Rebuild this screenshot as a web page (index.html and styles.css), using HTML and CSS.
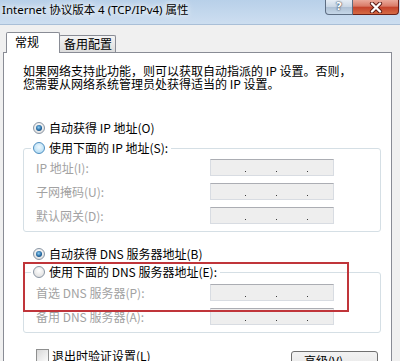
FILE: index.html
```html
<html>
<head>
<meta charset="utf-8">
<link rel="stylesheet" href="styles.css">
</head>
<body>

<div class="titlebar">
  <span class="title">Internet 协议版本 4 (TCP/IPv4) 属性</span>
  <div class="caption-buttons">
    <div class="caption-help">?</div>
    <div class="caption-close">
      <svg width="14" height="11" viewBox="0 0 14 11">
        <path d="M3 1.5 L11 9.5 M11 1.5 L3 9.5" stroke="#5a1a14" stroke-width="4.2" stroke-linecap="round"/>
        <path d="M3 1.5 L11 9.5 M11 1.5 L3 9.5" stroke="white" stroke-width="2.4" stroke-linecap="round"/>
      </svg>
    </div>
  </div>
</div>

<div class="tabs">
  <div class="tab tab-active">常规</div>
  <div class="tab">备用配置</div>
</div>

<div class="tab-panel">
  <p class="intro">如果网络支持此功能，则可以获取自动指派的 IP 设置。否则，<br>您需要从网络系统管理员处获得适当的 IP 设置。</p>

  <div class="option option-ip"><span class="radio checked"></span>自动获得 IP 地址(O)</div>

  <fieldset class="group">
    <legend class="option"><span class="radio hover"></span>使用下面的 IP 地址(S):</legend>
    <div class="field">
      <span class="field-label">IP 地址(I):</span>
      <div class="ipbox"><span></span><span></span><span></span></div>
    </div>
    <div class="field">
      <span class="field-label">子网掩码(U):</span>
      <div class="ipbox"><span></span><span></span><span></span></div>
    </div>
    <div class="field">
      <span class="field-label">默认网关(D):</span>
      <div class="ipbox"><span></span><span></span><span></span></div>
    </div>
  </fieldset>

  <div class="option option-dns"><span class="radio checked"></span>自动获得 DNS 服务器地址(B)</div>

  <fieldset class="group group-dns">
    <legend class="option"><span class="radio"></span>使用下面的 DNS 服务器地址(E):</legend>
    <div class="field">
      <span class="field-label">首选 DNS 服务器(P):</span>
      <div class="ipbox"><span></span><span></span><span></span></div>
    </div>
    <div class="field">
      <span class="field-label">备用 DNS 服务器(A):</span>
      <div class="ipbox"><span></span><span></span><span></span></div>
    </div>
  </fieldset>

  <div class="footer">
    <div class="check"><span class="checkbox"></span>退出时验证设置(L)</div>
    <div class="button">高级(V)...</div>
  </div>

  <div class="annotation"></div>
</div>

</body>
</html>
```

FILE: styles.css
```css
body {
  margin: 0;
  width: 400px;
  height: 361px;
  overflow: hidden;
  background-color: #f0f0f0;
  font-family: "Noto Sans CJK SC", sans-serif;
  font-size: 12px;
  color: black;
}

.titlebar {
  display: flex;
  justify-content: space-between;
  align-items: flex-start;
  height: 24px;
  background: linear-gradient(#b8d0e9, #cddef0);
  border-bottom: 1px solid #a9bfd7;
}

.title {
  margin-left: 2px;
  line-height: 20px;
  font-family: "Noto Sans", "Noto Sans CJK SC", sans-serif;
  font-size: 11.5px;
  text-shadow: 0 0 5px white, 0 0 8px white;
}

.caption-buttons {
  display: flex;
  margin-right: 1px;
}

.caption-help {
  width: 28px;
  height: 15px;
  box-sizing: border-box;
  border: 1px solid #5d6d82;
  border-top: none;
  border-radius: 0 0 0 4px;
  background: linear-gradient(#e6edf5, #c9d6e4 50%, #aec0d4 51%, #c6d7e8);
  color: white;
  font-family: "DejaVu Sans", sans-serif;
  font-weight: bold;
  font-size: 11px;
  line-height: 13px;
  text-align: center;
  text-shadow: 0 0 2px #2b3a4f, 0 0 1px #2b3a4f;
}

.caption-close {
  display: flex;
  justify-content: center;
  align-items: center;
  width: 46px;
  height: 15px;
  box-sizing: border-box;
  border: 1px solid #6b2119;
  border-top: none;
  border-left: none;
  border-radius: 0 0 4px 0;
  background: linear-gradient(#eaa99b, #d97a66 45%, #c4422b 50%, #d56a44);
}

.tabs {
  position: relative;
  z-index: 1;
  display: flex;
  align-items: flex-end;
  height: 28px;
  margin-bottom: -1px;
  padding-left: 6px;
}

.tab {
  box-sizing: border-box;
  height: 17px;
  width: 57px;
  margin-left: -1px;
  margin-bottom: 1px;
  padding-left: 4px;
  border: 1px solid #898c95;
  border-bottom: none;
  border-radius: 2px 2px 0 0;
  background: linear-gradient(#f4f4f4, #dcdcdc);
  line-height: 15px;
}

.tab-active {
  position: relative;
  z-index: 1;
  height: 21px;
  width: 54px;
  margin-left: 0;
  margin-bottom: 0;
  padding-left: 8px;
  background: white;
  line-height: 18px;
}

.tab-panel {
  position: relative;
  box-sizing: border-box;
  width: 389px;
  height: 320px;
  margin-left: 3px;
  padding: 0 10px 0 19px;
  border: 1px solid #898c95;
  background-color: white;
}

.intro {
  margin: 11px 0 0;
  line-height: 13px;
}

.option {
  display: flex;
  align-items: center;
  gap: 4px;
  line-height: 14px;
}

.option-ip {
  margin: 31px 0 0 10px;
}

.option-dns {
  margin: 15px 0 0 10px;
}

.radio {
  position: relative;
  flex: none;
  box-sizing: border-box;
  width: 12px;
  height: 12px;
  border-radius: 50%;
  border: 1px solid #8a96a4;
  background: radial-gradient(circle at 50% 35%, #ffffff, #d9d9d9);
}

.radio.hover {
  border-color: #4f8fc0;
  background: radial-gradient(circle at 50% 40%, #eef8fe, #a6d6f2);
}

.radio.checked::after {
  content: "";
  position: absolute;
  left: 2px;
  top: 2px;
  width: 6px;
  height: 6px;
  border-radius: 50%;
  background: radial-gradient(circle at 45% 40%, #8fd0f6, #1c5f98 60%, #0e3d68);
}

.group {
  min-width: 0;
  margin: 6px 0 0;
  padding: 4px 0 7px;
  border: 1px solid #d5dfe5;
  border-radius: 3px;
}

.group legend {
  margin-left: 7px;
  padding: 0 3px 0 2px;
}

.group-dns {
  margin-top: 4px;
  padding-top: 5px;
}

.field {
  display: flex;
  align-items: center;
  height: 17px;
  padding-left: 12px;
}

.field + .field {
  margin-top: 7px;
}

.field-label {
  width: 174px;
  color: #a2a2a2;
}

.ipbox {
  display: flex;
  align-items: flex-end;
  gap: 30px;
  box-sizing: border-box;
  width: 124px;
  height: 17px;
  padding: 0 0 3px 34px;
  border: 1px solid #d8dce2;
  border-top-color: #abadb3;
  background-color: #eeeeee;
}

.ipbox span {
  width: 1px;
  height: 1px;
  background-color: #3c3c3c;
}

.footer {
  display: flex;
  justify-content: space-between;
  align-items: flex-start;
  margin-top: 16px;
  padding: 0 3px 0 13px;
}

.check {
  display: flex;
  align-items: center;
  gap: 3px;
  line-height: 13px;
}

.checkbox {
  box-sizing: border-box;
  width: 13px;
  height: 13px;
  border: 1px solid #8e8f8f;
  background: linear-gradient(135deg, #d8d8d8, #fbfbfb);
}

.button {
  box-sizing: border-box;
  width: 87px;
  height: 23px;
  margin-top: 2px;
  padding: 1px 0 0 12px;
  border: 1px solid #707070;
  border-radius: 3px;
  background: linear-gradient(#f2f2f2, #ebebeb 50%, #dddddd 51%, #cfcfcf);
  line-height: 15px;
}

.annotation {
  position: absolute;
  left: 19px;
  top: 209px;
  width: 326px;
  height: 50px;
  box-sizing: border-box;
  border: 2px solid #c0353a;
}
```
